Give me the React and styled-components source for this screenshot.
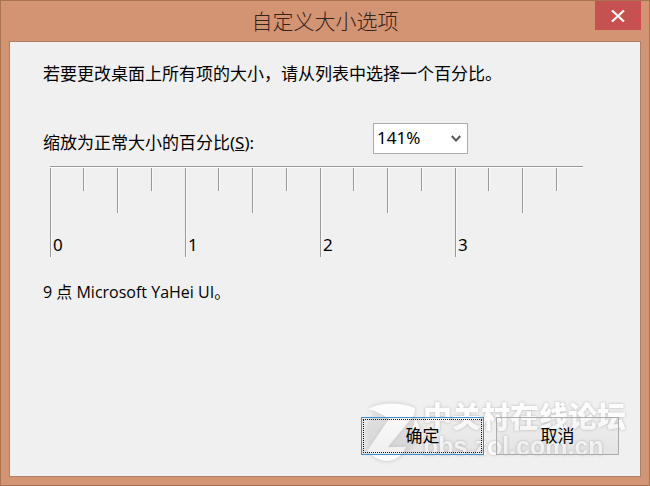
import React, { Component } from 'react'
import styled, { createGlobalStyle } from 'styled-components'

const marks = [0, 1, 2, 3]

export default class App extends Component {
    state = { scale: '141%' }

    render() {
        return (
            <>
                <GlobalStyle />
                <Dialog role="dialog" aria-labelledby="title">
                    <TitleBar>
                        <h1 id="title">自定义大小选项</h1>
                        <CloseButton type="button" aria-label="关闭">
                            <svg width="14" height="12" viewBox="0 0 14 12">
                                <path d="M1 0.5L13 11.5M13 0.5L1 11.5" stroke="#fff" strokeWidth="2.2" />
                            </svg>
                        </CloseButton>
                    </TitleBar>
                    <Client>
                        <Text>若要更改桌面上所有项的大小，请从列表中选择一个百分比。</Text>
                        <ScaleRow>
                            <label htmlFor="scale">缩放为正常大小的百分比(<u>S</u>):</label>
                            <SelectBox>
                                <select
                                    id="scale"
                                    value={this.state.scale}
                                    onChange={e => this.setState({ scale: e.target.value })}
                                >
                                    <option>100%</option>
                                    <option>125%</option>
                                    <option>141%</option>
                                    <option>150%</option>
                                    <option>200%</option>
                                </select>
                                <svg width="10" height="8" viewBox="0 0 10 8">
                                    <path d="M0.8 1L5 5.6L9.2 1" fill="none" stroke="#555" strokeWidth="2" />
                                </svg>
                            </SelectBox>
                        </ScaleRow>
                        <Ruler>
                            {marks.map(n => (
                                <Unit key={n}>
                                    <Tick $height={89}>{n}</Tick>
                                    <Tick $height={23} />
                                    <Tick $height={45} />
                                    <Tick $height={23} />
                                </Unit>
                            ))}
                        </Ruler>
                        <Note>9 点 Microsoft YaHei UI。</Note>
                        <Footer>
                            <Watermark>
                                <svg width="56" height="60" viewBox="0 0 56 60">
                                    <circle cx="28" cy="30" r="26" fill="#dcdcdc" opacity="0.3" />
                                    <path
                                        d="M4 7C17 0 36 0 51 6L50 13L24 45L42 45C38 54 31 59 22 59C14 58 8 54 3 49L25 17C18 12 12 9 4 7Z"
                                        fill="#fff"
                                    />
                                    <path d="M51 17C54 21 56 25 55 29L48 27C50 23 50 21 51 17Z" fill="#fff" />
                                </svg>
                                <div>
                                    <Forum>中关村在线论坛</Forum>
                                    <Site>bbs.zol.com.cn</Site>
                                </div>
                            </Watermark>
                            <Button type="button" $focused><span>确定</span></Button>
                            <Button type="button"><span>取消</span></Button>
                        </Footer>
                    </Client>
                </Dialog>
            </>
        )
    }
}

const GlobalStyle = createGlobalStyle`
    * {
        box-sizing: border-box;
    }
    body {
        margin: 0;
        color: #000;
        font: 17px/24px "Noto Sans", "Noto Sans CJK SC", sans-serif;
    }
    button, select {
        color: inherit;
        font: inherit;
    }
`

const Dialog = styled.div`
    display: flex;
    flex-direction: column;
    min-height: 100vh;
    padding: 0 8px 8px;
    border: 1px solid #a87253;
    background: #d39474;
`

const TitleBar = styled.header`
    display: grid;
    grid-template-columns: 46px 1fr 46px;
    height: 40px;
    h1 {
        grid-column: 2;
        margin: 0;
        color: #33231b;
        font-size: 21px;
        font-weight: 300;
        line-height: 41px;
        text-align: center;
    }
`

const CloseButton = styled.button`
    display: flex;
    align-items: center;
    justify-content: center;
    height: 29px;
    padding: 0;
    border: 0;
    background: #c75050;
`

const Client = styled.main`
    display: flex;
    flex: 1;
    flex-direction: column;
    padding: 20px 20px 20px 33px;
    border: 1px solid #b17e66;
    background: #f0f0f0;
`

const Text = styled.p`
    margin: 0;
`

const Note = styled(Text)`
    font-family: "Open Sans", "Noto Sans CJK SC", sans-serif;
    font-size: 16px;
`

const ScaleRow = styled.div`
    display: flex;
    margin-top: 37px;
    label {
        width: 330px;
        padding-top: 8px;
    }
`

const SelectBox = styled.div`
    position: relative;
    width: 95px;
    height: 31px;
    select {
        width: 100%;
        height: 100%;
        padding: 0 24px 2px 3px;
        border: 1px solid #acacac;
        border-radius: 0;
        background: #fff;
        appearance: none;
    }
    svg {
        position: absolute;
        top: 12px;
        right: 7px;
        pointer-events: none;
    }
`

const Ruler = styled.div`
    display: flex;
    max-width: 533px;
    margin: 11px 0 23px 7px;
    overflow: hidden;
    border-top: 1px solid #999;
    box-shadow: inset 0 1px #fff;
`

const Unit = styled.div`
    display: grid;
    flex: none;
    grid-template-columns: 33px 34px 34px 34px;
    align-items: start;
    padding-top: 1px;
`

const Tick = styled.div`
    display: flex;
    align-items: flex-end;
    height: ${props => props.$height}px;
    padding-left: 2px;
    border-left: 1px solid #999;
    box-shadow: inset 1px 0 #fafafa;
`

const Footer = styled.footer`
    position: relative;
    display: flex;
    justify-content: flex-end;
    gap: 12px;
    margin: auto 1px 1px 0;
`

const Button = styled.button`
    z-index: 1;
    display: flex;
    width: 123px;
    height: 38px;
    padding: 1px;
    border: 1px solid ${props => (props.$focused ? '#3c8cc8' : '#acacac')};
    background: linear-gradient(rgba(0, 0, 0, 0.01), rgba(0, 0, 0, 0.05)) padding-box;
    outline: none;
    span {
        display: flex;
        flex: 1;
        align-items: center;
        justify-content: center;
        align-self: stretch;
        border: 1px dotted ${props => (props.$focused ? '#111' : 'transparent')};
    }
`

const Watermark = styled.div`
    position: absolute;
    right: -7px;
    bottom: -7px;
    display: flex;
    gap: 3px;
    color: #fff;
    opacity: 0.85;
    pointer-events: none;
    text-shadow: 0 0 3px #aaa;
    svg {
        filter: drop-shadow(0 0 2px #bbb);
    }
`

const Forum = styled.div`
    font-size: 29px;
    font-weight: 900;
    line-height: 30px;
`

const Site = styled.div`
    font: bold 25px/28px "Liberation Sans", sans-serif;
`
